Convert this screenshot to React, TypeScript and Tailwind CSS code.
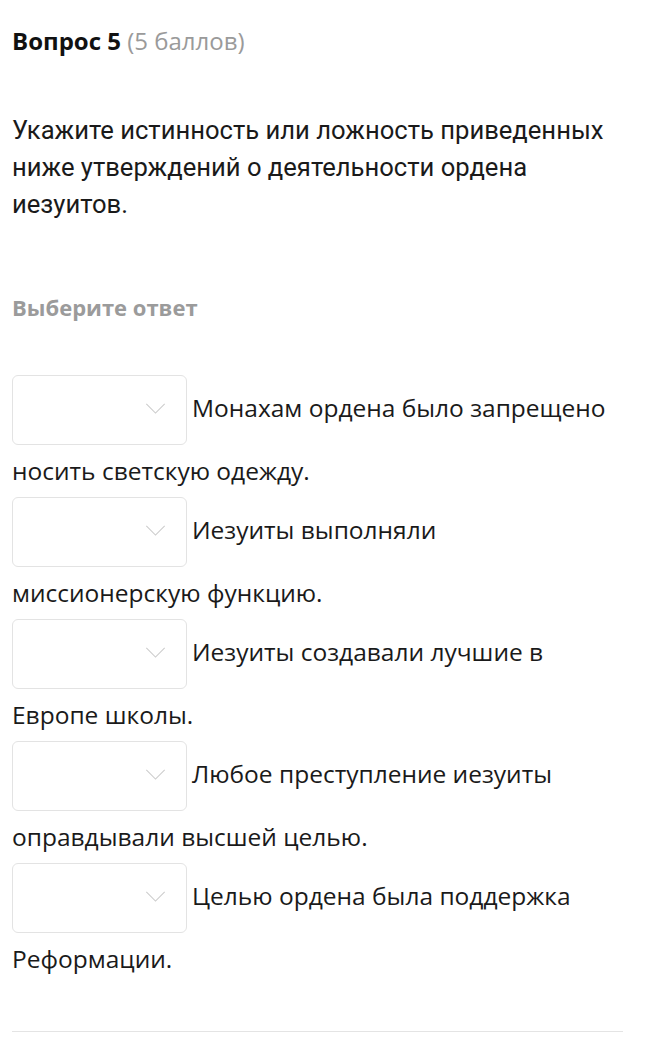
const ITEMS = [
  'Монахам ордена было запрещено носить светскую одежду.',
  'Иезуиты выполняли миссионерскую функцию.',
  'Иезуиты создавали лучшие в Европе школы.',
  'Любое преступление иезуиты оправдывали высшей целью.',
  'Целью ордена была поддержка Реформации.',
]

const Chevron = () => (
  <svg viewBox="0 0 22 12" className="mb-[4px] w-[21px] h-[11px]" fill="none" stroke="#cdcdcd" strokeWidth="1.2">
    <path d="M1 1l10 10 10-10" />
  </svg>
)

const App = () => {
  return (
    <div className="min-h-[1046px] bg-white px-3 pt-[24px] font-['Open_Sans',sans-serif] text-[#111]">
      <h2 className="text-[24px] leading-[34px]">
        <span className="font-bold">Вопрос 5</span> <span className="text-[#9a9a9a]">(5 баллов)</span>
      </h2>

      <p className="mt-[54px] font-[Roboto,sans-serif] text-[25.6px] leading-[37px] text-[#1a1a1a]">
        Укажите истинность или ложность приведенных ниже утверждений о деятельности ордена иезуитов.
      </p>

      <div className="mt-[69px] text-[22px] font-bold leading-[30px] text-[#9b9b9b]">Выберите ответ</div>

      <div className="mt-[53px] pr-3">
        {ITEMS.map((item) => (
          <div key={item} className="text-[24.5px] leading-[52px] text-[#1a1a1a]">
            <span className="mr-[5px] inline-flex h-[70px] w-[175px] items-center justify-end rounded-[6px] border border-[#e3e3e3] pr-[20px] align-middle">
              <Chevron />
            </span>
            {item}
          </div>
        ))}
      </div>

      <div className="mt-[46px] mr-3 border-t border-[#e4e4e4]" />
    </div>
  )
}

export default App
